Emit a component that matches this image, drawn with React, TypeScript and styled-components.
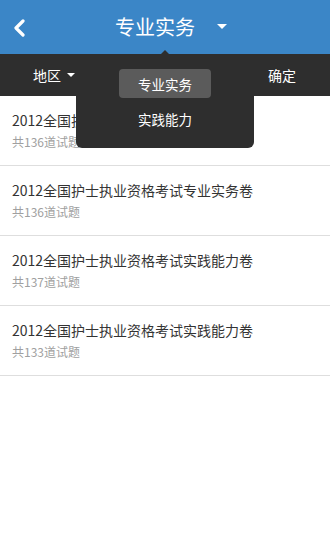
import React from "react";
import styled, { createGlobalStyle } from "styled-components";

const GlobalStyle = createGlobalStyle`
  html, body {
    margin: 0;
    padding: 0;
    background: #ffffff;
    font-family: "Noto Sans CJK SC", "Noto Sans", sans-serif;
  }
`;

const Page = styled.div`
  position: relative;
  width: 330px;
  height: 550px;
  background: #fff;
  overflow: hidden;
`;

const Header = styled.div`
  height: 54px;
  background: #3b86c7;
  display: flex;
  align-items: center;
  justify-content: center;
  position: relative;
  color: #fff;
`;

const BackButton = styled.div`
  position: absolute;
  left: 12px;
  top: 19px;
  width: 16px;
  height: 18px;
  display: flex;
`;

const HeaderTitle = styled.div`
  display: flex;
  align-items: center;
  gap: 22px;
  font-size: 20px;
  margin-left: 12px;
  padding-bottom: 1px;
`;

const Caret = styled.span<{ $size: number; $color: string }>`
  display: inline-block;
  width: 0;
  height: 0;
  border-left: ${(p) => p.$size}px solid transparent;
  border-right: ${(p) => p.$size}px solid transparent;
  border-top: ${(p) => Math.round(p.$size * 0.9)}px solid ${(p) => p.$color};
`;

const Toolbar = styled.div`
  height: 42px;
  background: #2e2e2e;
  display: flex;
  align-items: center;
  justify-content: space-between;
  padding: 0 34px 0 33px;
  color: #fff;
  font-size: 14px;
`;

const ToolItem = styled.div`
  display: flex;
  align-items: center;
  gap: 6px;
`;

const List = styled.div`
  display: flex;
  flex-direction: column;
`;

const Row = styled.div`
  height: 69px;
  border-bottom: 1px solid #dedede;
  padding: 0 12px;
  display: flex;
  flex-direction: column;
  justify-content: center;
  gap: 3px;
`;

const RowTitle = styled.div`
  font-size: 14px;
  color: #333;
  line-height: 20px;
`;

const RowSub = styled.div`
  font-size: 12px;
  color: #a0a0a0;
  line-height: 18px;
`;

const Pointer = styled.div`
  position: absolute;
  left: 161px;
  top: 50px;
  width: 0;
  height: 0;
  border-left: 4px solid transparent;
  border-right: 4px solid transparent;
  border-bottom: 4px solid #2e2e2e;
`;

const Dropdown = styled.div`
  position: absolute;
  left: 76px;
  top: 54px;
  width: 178px;
  height: 94px;
  background: #2e2e2e;
  border-radius: 0 0 6px 6px;
  display: flex;
  flex-direction: column;
  align-items: center;
  padding-top: 15px;
  box-sizing: border-box;
  gap: 6px;
`;

const MenuItem = styled.div<{ $active?: boolean }>`
  width: 92px;
  height: 29px;
  border-radius: 4px;
  background: ${(p) => (p.$active ? "#5b5b5b" : "transparent")};
  color: #fff;
  font-size: 13.5px;
  display: flex;
  align-items: center;
  justify-content: center;
`;

const papers = [
  { title: "2012全国护士执业资格考试专业实务卷", count: 136 },
  { title: "2012全国护士执业资格考试专业实务卷", count: 136 },
  { title: "2012全国护士执业资格考试实践能力卷", count: 137 },
  { title: "2012全国护士执业资格考试实践能力卷", count: 133 },
];

export default function App() {
  return (
    <Page>
      <GlobalStyle />
      <Header>
        <BackButton>
          <svg width="16" height="18" viewBox="0 0 16 18">
            <polyline
              points="11,2 4,9 11,16"
              fill="none"
              stroke="#fff"
              strokeWidth="3.2"
              strokeLinecap="round"
              strokeLinejoin="round"
            />
          </svg>
        </BackButton>
        <HeaderTitle>
          专业实务
          <Caret $size={5} $color="#fff" />
        </HeaderTitle>
      </Header>
      <Toolbar>
        <ToolItem>
          地区
          <Caret $size={4} $color="#fff" />
        </ToolItem>
        <ToolItem>确定</ToolItem>
      </Toolbar>
      <List>
        {papers.map((p, i) => (
          <Row key={i}>
            <RowTitle>{p.title}</RowTitle>
            <RowSub>共{p.count}道试题</RowSub>
          </Row>
        ))}
      </List>
      <Pointer />
      <Dropdown>
        <MenuItem $active>专业实务</MenuItem>
        <MenuItem>实践能力</MenuItem>
      </Dropdown>
    </Page>
  );
}
